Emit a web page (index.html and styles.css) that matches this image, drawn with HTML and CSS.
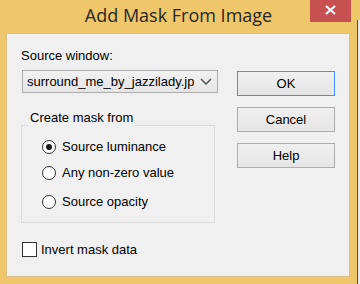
FILE: index.html
```html
<!DOCTYPE html>
<html lang="en">
<head>
    <meta charset="UTF-8">
    <title>Add Mask From Image</title>
    <link rel="stylesheet" href="styles.css">
</head>
<body>
    <div class="screen">
        <div class="window">
            <div class="titlebar">
                <span></span>
                <span class="title">Add Mask From Image</span>
                <div class="close">
                    <svg width="11" height="10" viewBox="0 0 11 10">
                        <path d="M1 1 L10 9 M10 1 L1 9" stroke="#fff" stroke-width="2.2" fill="none"/>
                    </svg>
                </div>
            </div>

            <div class="client">
                <div class="left">
                    <div class="label">Source window:</div>
                    <div class="combo">
                        <span class="combo-text">surround_me_by_jazzilady.jpg</span>
                        <svg class="chevron" width="12" height="7" viewBox="0 0 12 7">
                            <path d="M1 1 L6 6 L11 1" stroke="#5a5a5a" stroke-width="1.6" fill="none"/>
                        </svg>
                    </div>

                    <!-- mask source -->
                    <div class="group">
                        <div class="group-label">Create mask from</div>
                        <div class="radio-row first"><span class="radio checked"></span>Source luminance</div>
                        <div class="radio-row second"><span class="radio"></span>Any non-zero value</div>
                        <div class="radio-row third"><span class="radio"></span>Source opacity</div>
                    </div>

                    <div class="check-row"><span class="checkbox"></span>Invert mask data</div>
                </div>

                <div class="right">
                    <div class="btn default">OK</div>
                    <div class="btn">Cancel</div>
                    <div class="btn">Help</div>
                </div>
            </div>
        </div>
        <div class="behind"></div>
    </div>
</body>
</html>
```

FILE: styles.css
```css
html, body {
    margin: 0;
    height: 100%;
}

body {
    background-color: #efc76a;
    font-family: "Liberation Sans", Arial, sans-serif;
    font-size: 13px;
    color: #000;
    overflow: hidden;
}

.screen {
    display: flex;
    height: 284px;
}

.window {
    width: 357px;
    height: 284px;
    background-color: #efc76a;
}

.titlebar {
    display: grid;
    grid-template-columns: 1fr auto 1fr;
    align-items: start;
    height: 33px;
}

.title {
    font-family: "Open Sans", sans-serif;
    font-size: 18px;
    line-height: 24px;
    padding-top: 3px;
    color: #262626;
}

.close {
    justify-self: end;
    margin-right: 6px;
    width: 41px;
    height: 22px;
    background-color: #c75050;
    display: flex;
    justify-content: center;
    align-items: flex-start;
    padding-top: 5px;
    box-sizing: border-box;
}

.client {
    margin-left: 6px;
    width: 344px;
    height: 244px;
    box-sizing: border-box;
    border: 1px solid #d9c08a;
    background-color: #f0f0f0;
    display: grid;
    grid-template-columns: 197px 98px;
    column-gap: 19px;
    align-items: start;
    padding: 14px 0 0 14px;
}

.label {
    line-height: 15px;
}

.combo {
    margin: 7px 0 0 1px;
    width: 196px;
    height: 23px;
    box-sizing: border-box;
    border: 1px solid #acacac;
    background: linear-gradient(#f2f2f2, #e5e5e5);
    display: flex;
    align-items: center;
    padding-left: 4px;
}

.combo-text {
    width: 167px;
    overflow: hidden;
    white-space: nowrap;
    line-height: 15px;
}

.chevron {
    margin-left: 6px;
}

.group {
    margin-top: 32px;
    width: 194px;
    height: 98px;
    box-sizing: border-box;
    border: 1px solid #dcdcdc;
}

.group-label {
    width: fit-content;
    margin: -17px 0 0 6px;
    padding: 0 2px;
    line-height: 17px;
    background-color: #f0f0f0;
}

.radio-row {
    display: flex;
    align-items: center;
    height: 17px;
    margin-left: 20px;
    line-height: 17px;
}

.radio-row.first {
    margin-top: 12px;
}

.radio-row.second {
    margin-top: 9px;
}

.radio-row.third {
    margin-top: 12px;
}

.radio {
    width: 14px;
    height: 14px;
    box-sizing: border-box;
    border: 1px solid #333;
    border-radius: 50%;
    background-color: #fff;
    margin-right: 6px;
    display: flex;
    justify-content: center;
    align-items: center;
}

.radio.checked::after {
    content: "";
    width: 6px;
    height: 6px;
    border-radius: 50%;
    background-color: #1a1a1a;
}

.check-row {
    margin-top: 18px;
    display: flex;
    align-items: center;
    height: 17px;
    line-height: 17px;
}

.checkbox {
    width: 15px;
    height: 15px;
    box-sizing: border-box;
    border: 1px solid #333;
    background-color: #fff;
    margin: 0 4px 0 1px;
}

.right {
    margin-top: 23px;
    display: flex;
    flex-direction: column;
    gap: 11px;
}

.btn {
    height: 25px;
    box-sizing: border-box;
    border: 1px solid #acacac;
    background: linear-gradient(#f0f0f0, #e5e5e5);
    text-align: center;
    line-height: 22px;
    padding-top: 1px;
}

.btn.default {
    border-color: #3d96ee;
}

.behind {
    flex: 1;
    margin-top: 20px;
    border-left: 1px solid #4d4d4d;
    background-color: #e9e9e9;
}
```
